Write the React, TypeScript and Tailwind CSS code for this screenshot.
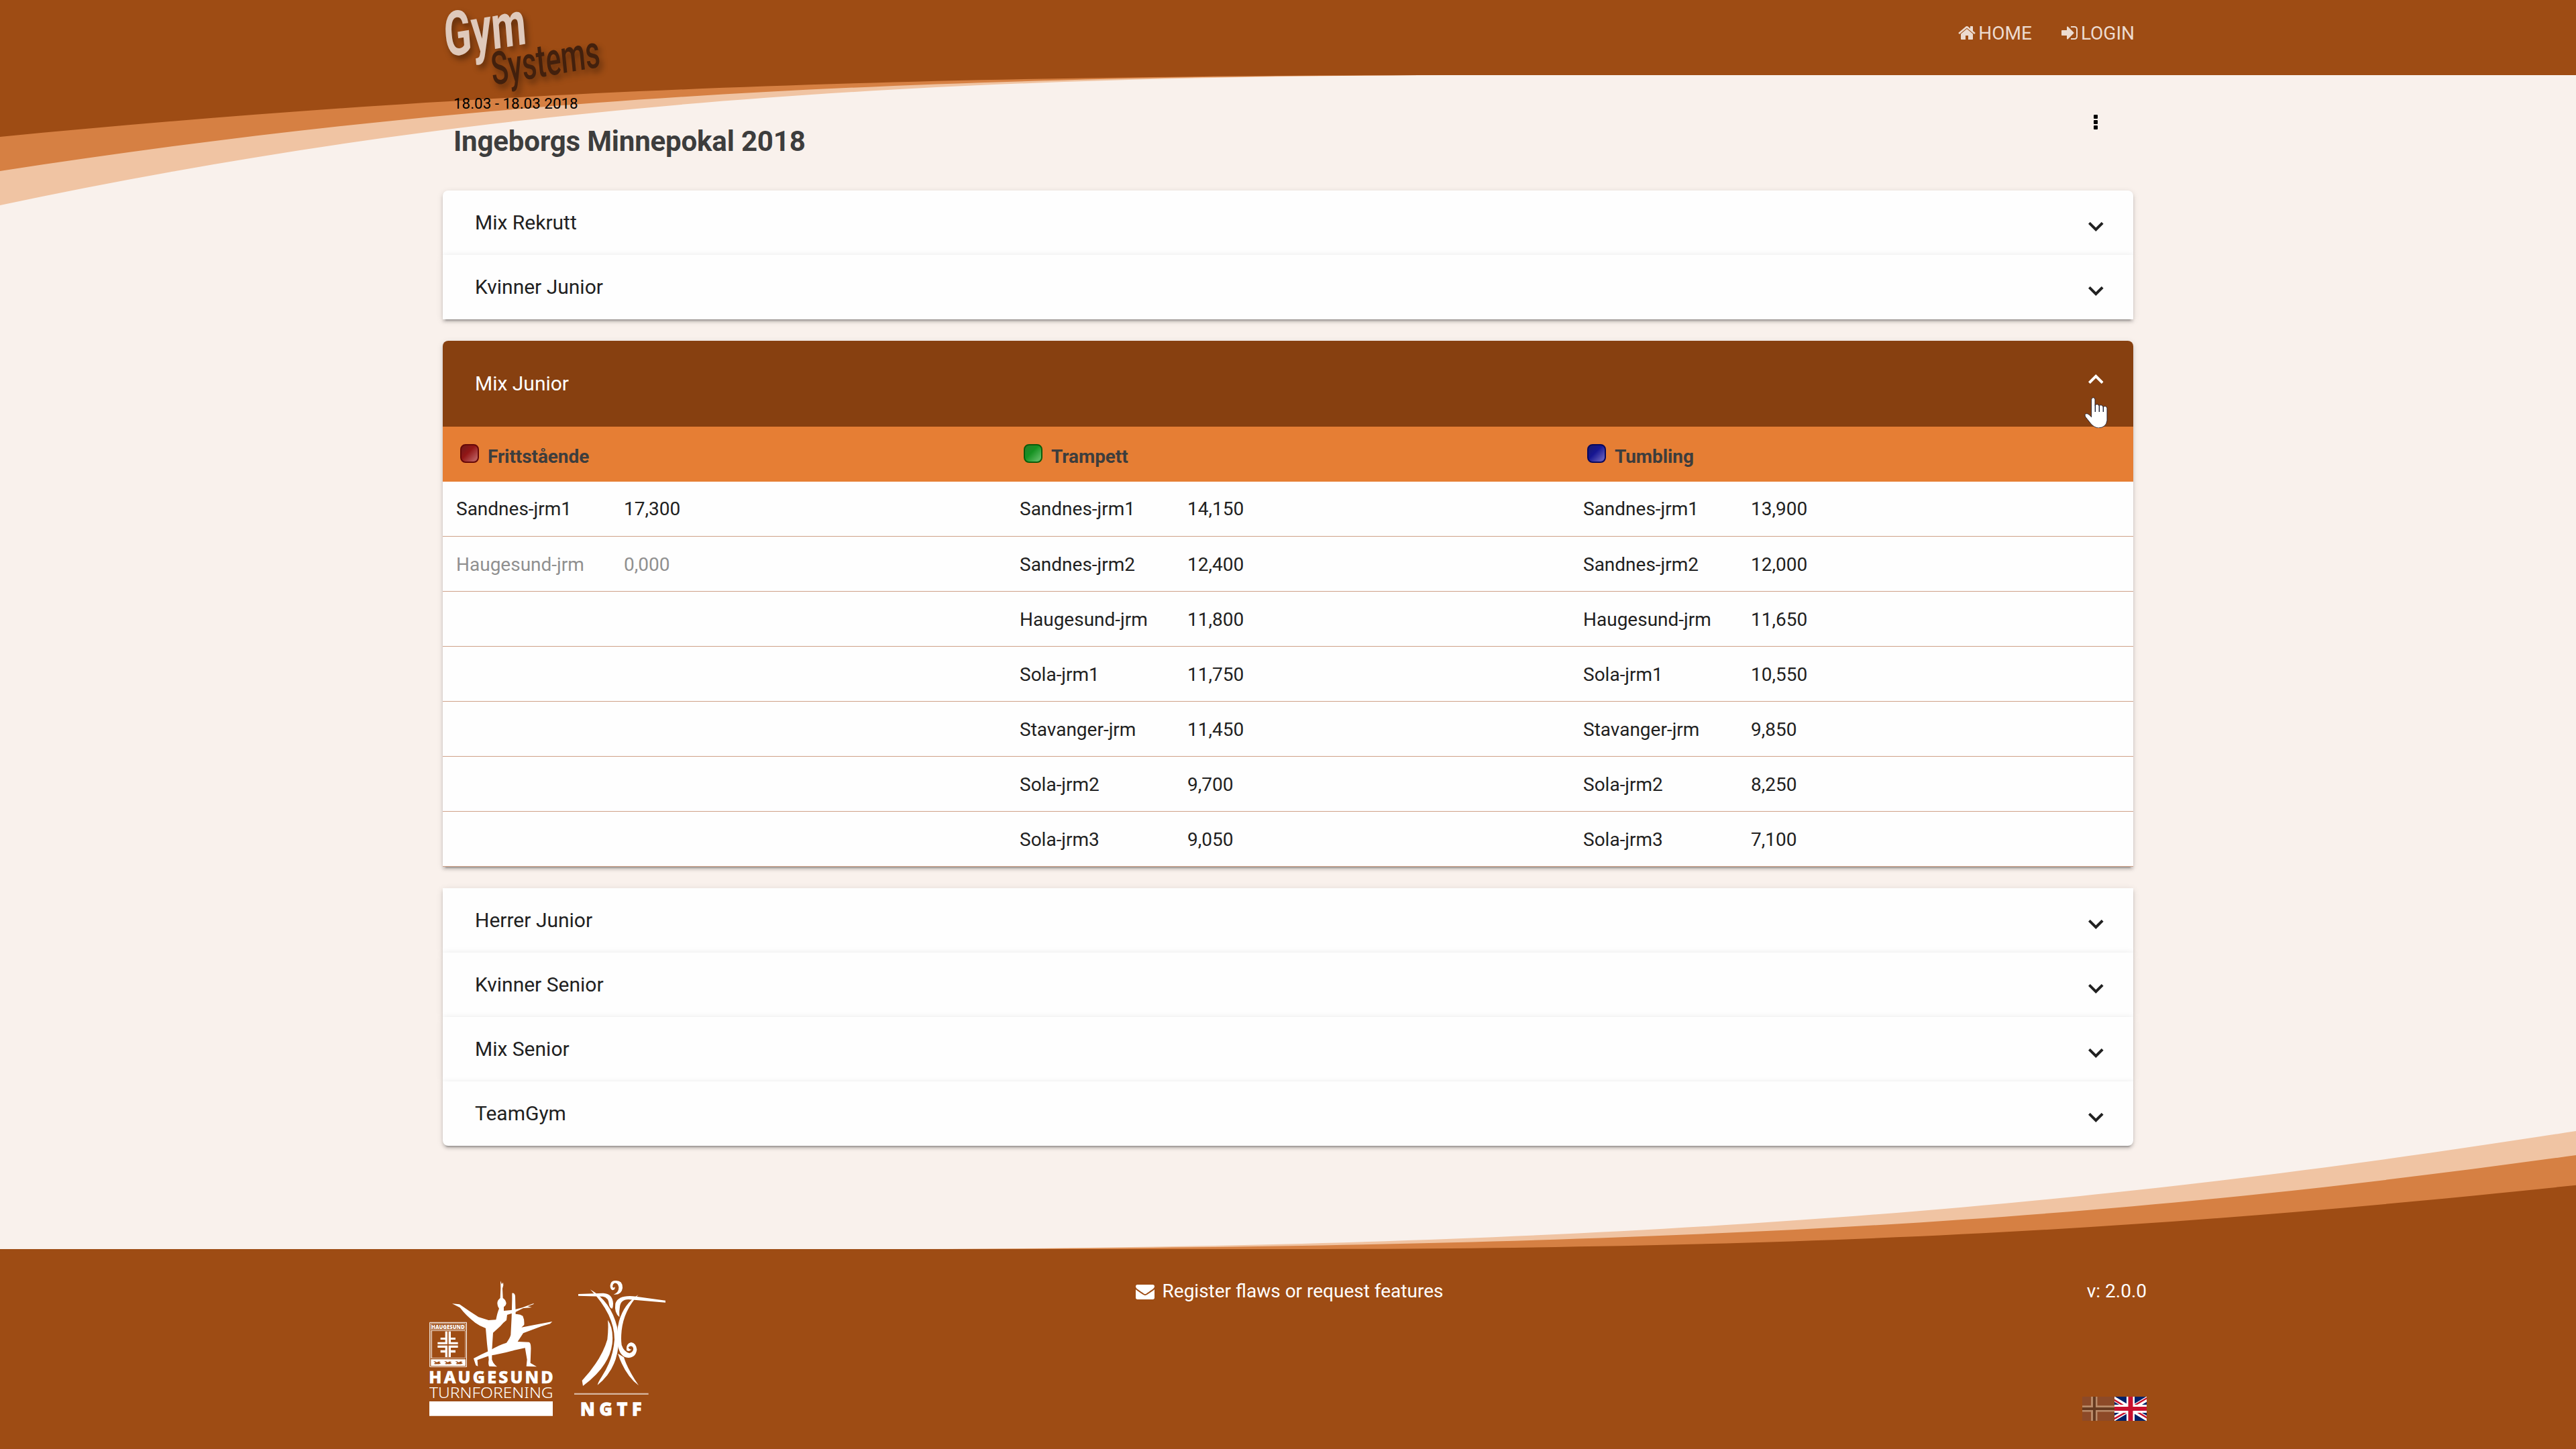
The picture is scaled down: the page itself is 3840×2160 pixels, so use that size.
import React from "react";

type Score = { team: string; score: string; muted?: boolean };

type Discipline = { name: string; badge: string; scores: Score[] };

const disciplines: Discipline[] = [
  {
    name: "Frittstående",
    badge:
      "border-[#650808] bg-[linear-gradient(135deg,#6b1a1a_0%,#921616_42%,#b8595a_85%,#b8595a_100%)]",
    scores: [
      { team: "Sandnes-jrm1", score: "17,300" },
      { team: "Haugesund-jrm", score: "0,000", muted: true },
    ],
  },
  {
    name: "Trampett",
    badge:
      "border-[#0a5c0a] bg-[linear-gradient(135deg,#2a7a2a_0%,#169222_42%,#59b860_85%,#59b860_100%)]",
    scores: [
      { team: "Sandnes-jrm1", score: "14,150" },
      { team: "Sandnes-jrm2", score: "12,400" },
      { team: "Haugesund-jrm", score: "11,800" },
      { team: "Sola-jrm1", score: "11,750" },
      { team: "Stavanger-jrm", score: "11,450" },
      { team: "Sola-jrm2", score: "9,700" },
      { team: "Sola-jrm3", score: "9,050" },
    ],
  },
  {
    name: "Tumbling",
    badge:
      "border-[#08085c] bg-[linear-gradient(135deg,#1a1a6b_0%,#161692_42%,#6059b8_85%,#6059b8_100%)]",
    scores: [
      { team: "Sandnes-jrm1", score: "13,900" },
      { team: "Sandnes-jrm2", score: "12,000" },
      { team: "Haugesund-jrm", score: "11,650" },
      { team: "Sola-jrm1", score: "10,550" },
      { team: "Stavanger-jrm", score: "9,850" },
      { team: "Sola-jrm2", score: "8,250" },
      { team: "Sola-jrm3", score: "7,100" },
    ],
  },
];

const rowIndexes = [0, 1, 2, 3, 4, 5, 6];

function Chevron({ className }: { className: string }) {
  return (
    <svg viewBox="0 0 22.6 14" className={className} fill="none" stroke="currentColor" strokeWidth="4">
      <path d="M1.4 1.3 11.3 11.2 21.2 1.3" />
    </svg>
  );
}

function Icon({ d }: { d: string }) {
  return (
    <svg viewBox="0 0 1792 1792" className="size-7 shrink-0" fill="currentColor">
      <path d={d} />
    </svg>
  );
}

const homePath =
  "M1472 992v480q0 26-19 45t-45 19h-384v-384h-256v384h-384q-26 0-45-19t-19-45v-480q0-1 .5-3t.5-3l575-474 575 474q1 2 1 6zm223-69l-62 74q-8 9-21 11h-3q-13 0-21-7l-692-577-692 577q-12 8-24 7-13-2-21-11l-62-74q-8-10-7-23.5t11-21.5l719-599q32-26 76-26t76 26l244 204v-195q0-14 9-23t23-9h192q14 0 23 9t9 23v408l219 182q10 8 11 21.5t-7 23.5z";
const signInPath =
  "M1312 896q0 26-19 45l-544 544q-19 19-45 19t-45-19-19-45v-288h-448q-26 0-45-19t-19-45v-384q0-26 19-45t45-19h448v-288q0-26 19-45t45-19 45 19l544 544q19 19 19 45zm352-352v704q0 119-84.5 203.5t-203.5 84.5h-320q-13 0-22.5-9.5t-9.5-22.5q0-4-1-20t-.5-26.5 3-23.5 10-19.5 20.5-6.5h320q66 0 113-47t47-113v-704q0-66-47-113t-113-47h-312l-11.5-1-11.5-3-8-5.5-7-9-2-13.5q0-4-1-20t-.5-26.5 3-23.5 10-19.5 20.5-6.5h320q119 0 203.5 84.5t84.5 203.5z";
const envelopePath =
  "M1792 710v794q0 66-47 113t-113 47h-1472q-66 0-113-47t-47-113v-794q44 49 101 87 362 246 497 345 57 42 92.5 65.5t94.5 48 110 24.5h2q51 0 110-24.5t94.5-48 92.5-65.5q170-123 498-345 57-39 100-87zm0-294q0 79-49 151t-122 123q-376 261-468 325-10 7-42.5 31t-54 38.8-52 32.5-57.5 27-50 9h-2q-23 0-50-9t-57.5-27-52-32.5-54-38.8-42.5-31q-91-64-262-182.5t-205-142.5q-62-42-117-115.5t-55-136.5q0-78 41.5-130t118.5-52h1472q65 0 112.5 47t47.5 113z";

const panelShadow =
  "shadow-[0_6px_2px_-4px_rgba(0,0,0,0.2),0_4px_4px_0_rgba(0,0,0,0.14),0_2px_10px_0_rgba(0,0,0,0.12)]";

function Panel({ title, rounded = "" }: { title: string; rounded?: string }) {
  return (
    <div className={`flex h-24 items-center justify-between bg-[#fefefe] pr-11 pl-12 text-[#212121] ${panelShadow} ${rounded}`}>
      <span className="text-[30px] leading-[34px]">{title}</span>
      <Chevron className="mt-[12px] h-[14px] w-[22.6px]" />
    </div>
  );
}

function TopWaves() {
  return (
    <svg viewBox="0 0 3840 320" className="absolute top-0 left-0 h-[320px] w-[3840px]">
      <path fill="#f0c4a3" d="M0 306C600 180 1200 112 2200 112V0H0Z" />
      <path fill="#d68043" d="M0 255C600 162.6 1200 112 2200 112V0H0Z" />
      <path fill="#9e4c14" d="M0 204C600 146 1200 112 2200 112H3840V0H0Z" />
    </svg>
  );
}

function BottomWaves() {
  return (
    <svg viewBox="0 1680 3840 480" className="absolute bottom-0 left-0 h-[480px] w-[3840px]">
      <path fill="#f0c4a3" d="M3840 1686C3240 1780 2540 1862 1300 1862H3840Z" />
      <path fill="#d68043" d="M3840 1722C3240 1805 2640 1862 1300 1862H3840Z" />
      <path fill="#9e4c14" d="M3840 1766.700C3240 1830 2740 1862 1900 1862H0V2160H3840Z" />
    </svg>
  );
}

function GymLogo() {
  return (
    <svg viewBox="0 0 260 140" className="h-[140px] w-[260px] drop-shadow-[4px_6px_5px_rgba(0,0,0,0.4)]" fontFamily="Roboto, sans-serif">
      <text transform="matrix(0.645 -0.106 0.08 1 4.500 85)" fontSize="92" fontWeight="700" fill="#dfc9bb">
        Gym
      </text>
      <text transform="matrix(0.615 -0.105 0.1 1 74.500 127)" fontSize="68" fontWeight="500" fill="#42200d">
        Systems
      </text>
    </svg>
  );
}

function HaugesundLogo() {
  return (
    <svg viewBox="60 87 552 606" className="h-[202px] w-[184px]" fill="#fff" fontFamily="'Noto Sans', sans-serif">
      <path d="M378 88 384 103 390 95 391 108 387 122 389 165Q402 172 404 190 402 200 393 205L393 222 435 218 475 208 528 188 525 193 500 202 518 207 480 210 440 230 408 240 405 264Q390 275 378 290L345 320Q343 350 340 400L340 440Q345 458 363 472L328 470Q322 460 326 440L318 370 312 300Q285 290 265 275 225 245 197 208L162 190 195 193Q240 225 280 250L325 264 358 262Q364 230 372 212 360 195 366 178 370 170 377 165L379 120Z" />
      <path d="M430 143Q440 140 444 155L446 237Q465 235 478 245 486 262 484 285L472 296 530 285 610 270 600 280 560 292 480 322 455 360 505 362Q516 364 514 400L512 455 540 472 494 470 497 440 488 388 440 398Q380 415 330 422L275 442 277 470 268 466 258 435Q290 418 330 400 370 375 405 365 420 345 424 330L428 250 430 170Z" />
      <g fill="none" stroke="#fff">
        <path strokeWidth="3" d="M62 274H226.500V472H62Z" />
        <path strokeWidth="2" d="M67 279H221V306H67ZM67 311H221V433H67ZM71 311V433" />
      </g>
      <text x="69" y="302" fontSize="25" fontWeight="900" textLength="149" lengthAdjust="spacingAndGlyphs">
        HAUGESUND
      </text>
      <path d="M131 314H141V371H97V362H131V351H110V342H131ZM146 314H156V342H177V351H156V362H188V371H146ZM97 377H141V429H131V409H110V398H131V387H97ZM146 377H188V387H156V398H177V409H156V429H146Z" />
      <path d="M67 439H222V468H67Z" />
      <g fill="#9e4c14">
        <path d="M78 448Q88 446 94 453 100 446 111 450L104 453 112 457Q104 462 94 460 86 462 80 458L88 455Z" />
        <path d="M127 448Q137 446 143 453 149 446 160 450L153 453 161 457Q153 462 143 460 135 462 129 458L137 455Z" />
        <path d="M176 448Q186 446 192 453 198 446 209 450L202 453 210 457Q202 462 192 460 184 462 178 458L186 455Z" />
      </g>
      <text x="58" y="547" fontSize="75" fontWeight="800" stroke="#fff" strokeWidth="2" textLength="556" lengthAdjust="spacing">
        HAUGESUND
      </text>
      <text x="60" y="613" fontSize="68" fontWeight="300" textLength="554" lengthAdjust="spacingAndGlyphs">
        TURNFORENING
      </text>
      <path d="M60 627H612V692H60Z" />
    </svg>
  );
}

function NgtfLogo() {
  return (
    <svg viewBox="708 87 408 606" className="h-[202px] w-[136px]" fill="#fff" fontFamily="'Noto Sans', sans-serif">
      <path d="M885 88Q925 82 924 120 920 152 884 149 908 140 907 116 903 96 888 98 878 103 880 116 886 122 890 114 892 128 880 130 868 126 869 108 872 90 885 88Z" />
      <path d="M726 147 838 143Q880 145 882 190 882 205 878 212 868 212 864 195 862 162 836 158L726 155Z" />
      <path d="M1116 176 985 158Q905 148 892 190 886 232 910 250 908 225 912 205 915 172 950 171L1116 185Z" />
      <path d="M780 127Q872 180 900 295L907 350Q905 480 812 554 815 540 830 518 882 440 888 350 888 240 780 127Z" />
      <path d="M995 150Q930 220 920 310 916 350 920 375 930 405 955 412 975 405 972 388 965 372 950 385 955 398 965 394 955 408 942 398 938 370 962 363 985 366 988 395 984 430 950 432 910 430 902 370 895 320 908 270 930 190 995 150Z" />
      <path d="M858 263Q885 300 878 370 865 470 747 558L743 534Q830 440 856 350 862 300 858 263Z" />
      <path d="M903 413 930 430Q945 480 996 556 935 510 903 413Z" />
      <path opacity="0.6" d="M708 590H1040V597H708Z" />
      <text x="735" y="690" fontSize="79" fontWeight="800" stroke="#fff" strokeWidth="4" textLength="274" lengthAdjust="spacing">
        NGTF
      </text>
    </svg>
  );
}

function NorwegianFlag() {
  return (
    <svg viewBox="0 0 48 36" className="h-9 w-12">
      <path fill="#8d4a28" d="M0 0H48V36H0Z" />
      <path fill="#b98a68" d="M13 0H22.500V36H13ZM0 13.300H48V22.500H0Z" />
      <path fill="#663a20" d="M16 0H20V36H16ZM0 16H48V20H0Z" />
    </svg>
  );
}

function BritishFlag() {
  return (
    <svg viewBox="0 0 48 36" className="h-9 w-12">
      <path fill="#012169" d="M0 0H48V36H0Z" />
      <path stroke="#fff" strokeWidth="7" d="M-6 0 54 36M54 0-6 36" />
      <path stroke="#c8102e" strokeWidth="2.500" d="M-4 2.500 24 19.500M52 0 24 16.500M24 19.500-6 36M24 16.500 54 35" />
      <path fill="#fff" d="M18 0H30V36H18ZM0 12H48V24H0Z" />
      <path fill="#c8102e" d="M20.500 0H27.500V36H20.500ZM0 15H48V21H0Z" />
    </svg>
  );
}

function HandCursor() {
  return (
    <svg viewBox="380 335 106 140" className="absolute top-[83.700px] right-[38px] h-[46.700px] w-[35.300px]">
      <path
        fill="#fff"
        stroke="#12142a"
        strokeWidth="2.500"
        d="M412 346Q413 337 420 337 428 338 428 346V372Q432 367 438 367 445 369 446 374 451 369 457 371 464 373 464 379 470 375 475 376 482 378 482 385V440Q478 471 443 473 422 470 408 452L385 423Q380 413 387 409 394 407 402 414L412 424Z"
      />
      <path stroke="#12142a" strokeWidth="4" d="M429 370V401M447 374V401M465 378V401" />
    </svg>
  );
}

export default function App() {
  return (
    <div className="relative flex h-[2160px] w-[3840px] flex-col overflow-hidden bg-[#f9f1ec] font-['Roboto',sans-serif] text-[28px] leading-[34px]">
      <TopWaves />
      <BottomWaves />

      <header className="relative mx-auto flex h-28 w-[2520px] items-start justify-between">
        <GymLogo />
        <nav className="-mr-[2px] flex pt-[31px] text-[#ecdbd0]">
          <a className="mr-[42px] flex items-center gap-[3px]">
            <Icon d={homePath} />
            <span className="pt-[2px]">HOME</span>
          </a>
          <a className="flex items-center gap-[3px]">
            <Icon d={signInPath} />
            <span className="pt-[2px]">LOGIN</span>
          </a>
        </nav>
      </header>

      <main className="relative mx-auto w-[2520px] flex-1">
        <div className="flex h-[172px] justify-between pr-[53px] pl-4">
          <div>
            <p className="pt-[28px] text-[22.4px] leading-[28px] text-black">18.03 - 18.03 2018</p>
            <h1 className="mt-[18px] text-[42px] leading-[50px] font-bold tracking-[-0.16px] text-[#3d3d3d]">
              Ingeborgs Minnepokal 2018
            </h1>
          </div>
          <div className="mt-[59px] flex flex-col gap-[2px]">
            <i className="size-[6px] rounded-[1px] bg-black" />
            <i className="size-[6px] rounded-[1px] bg-black" />
            <i className="size-[6px] rounded-[1px] bg-black" />
          </div>
        </div>

        <Panel title="Mix Rekrutt" rounded="rounded-t-lg" />
        <Panel title="Kvinner Junior" />

        <section className={`relative my-8 rounded-t-lg bg-[#fefefe] ${panelShadow}`}>
          <div className="flex h-32 items-center justify-between rounded-t-lg bg-[#874010] pr-11 pl-12 text-white">
            <span className="text-[30px] leading-[34px]">Mix Junior</span>
            <Chevron className="mb-[14px] h-[14px] w-[22.6px] rotate-180" />
          </div>
          <div className="grid h-[82px] grid-cols-3 bg-[#e67e34]">
            {disciplines.map((d) => (
              <div key={d.name} className="flex items-start pl-[26px]">
                <i className={`mt-[26px] size-7 rounded-lg border-2 ${d.badge}`} />
                <span className="mt-[28px] ml-[13px] font-bold tracking-[-0.08px] text-[#3d3d3d]">{d.name}</span>
              </div>
            ))}
          </div>
          {rowIndexes.map((i) => (
            <div
              key={i}
              className={`grid h-[82px] grid-cols-3 items-center border-b border-[#cfa188] text-[#212121] ${i > 0 ? "pt-[2px]" : ""}`}
            >
              {disciplines.map((d) => (
                <div key={d.name} className={d.scores[i]?.muted ? "flex pl-5 text-[#909090]" : "flex pl-5"}>
                  <span className="w-[250px]">{d.scores[i]?.team}</span>
                  <span>{d.scores[i]?.score}</span>
                </div>
              ))}
            </div>
          ))}
          <HandCursor />
        </section>

        <Panel title="Herrer Junior" />
        <Panel title="Kvinner Senior" />
        <Panel title="Mix Senior" />
        <Panel title="TeamGym" rounded="rounded-b-lg" />
      </main>

      <footer className="relative mx-auto flex h-[298px] w-[2560px] items-start justify-between pt-[47px] text-white">
        <div className="flex w-[600px] gap-8">
          <HaugesundLogo />
          <NgtfLogo />
        </div>
        <a className="-mt-[2px] flex items-center gap-3 pl-[4px]">
          <Icon d={envelopePath} />
          <span className="pt-px">Register flaws or request features</span>
        </a>
        <div className="-mt-px flex h-[210px] w-[600px] flex-col items-end justify-between">
          <span>v: 2.0.0</span>
          <div className="flex">
            <NorwegianFlag />
            <BritishFlag />
          </div>
        </div>
      </footer>
    </div>
  );
}
